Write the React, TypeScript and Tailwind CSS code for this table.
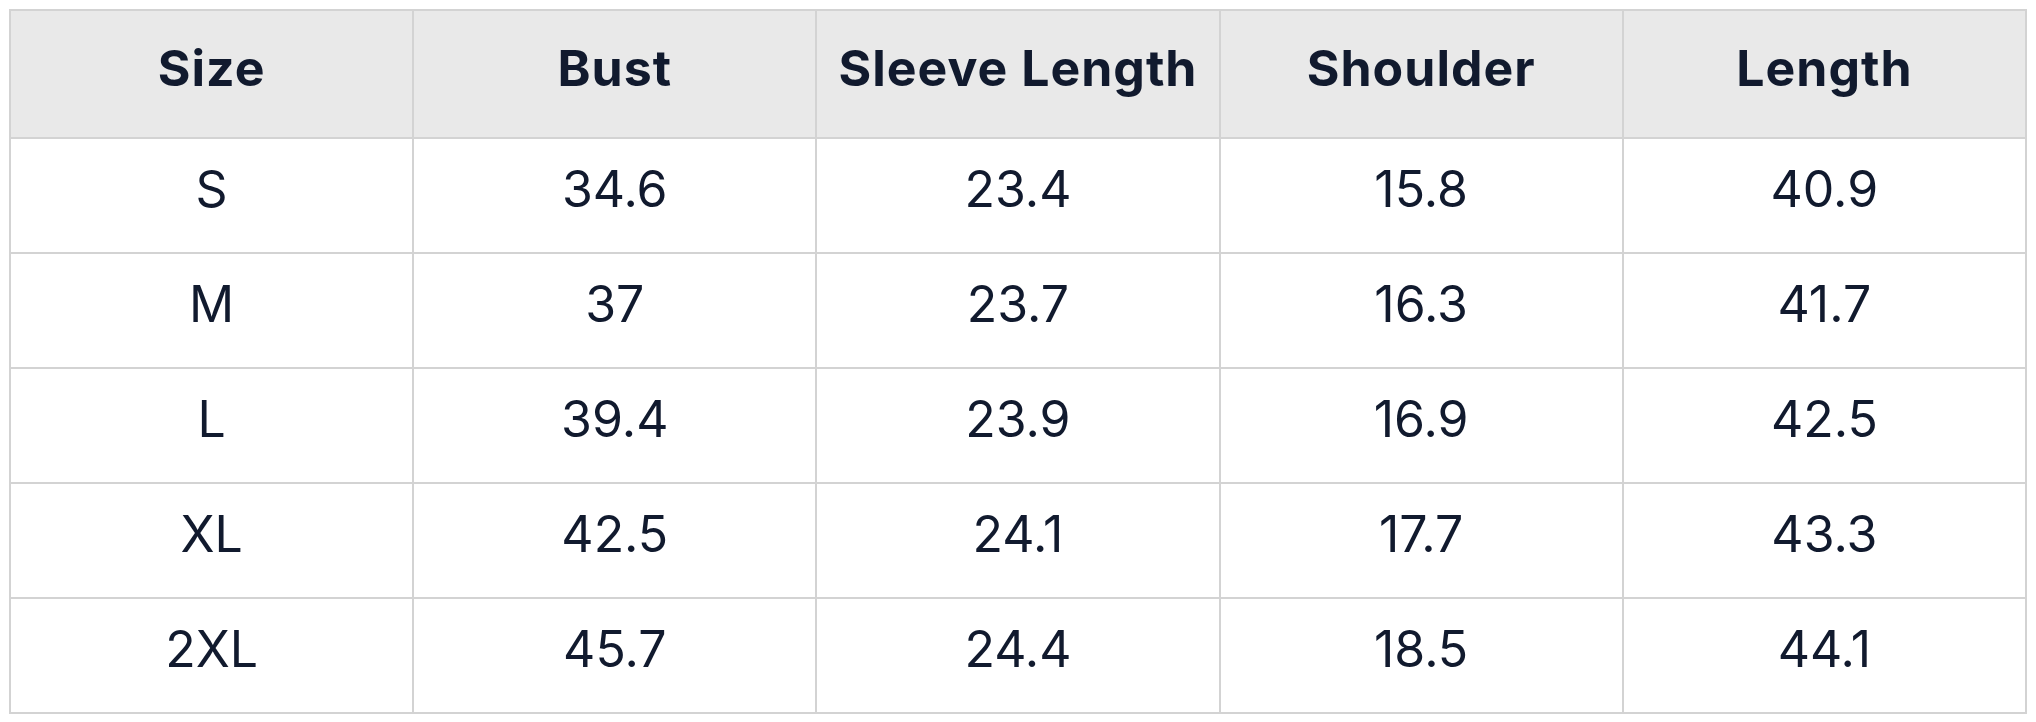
import React from 'react';

const headers = ['Size', 'Bust', 'Sleeve Length', 'Shoulder', 'Length'];

const rows: string[][] = [
  ['S', '34.6', '23.4', '15.8', '40.9'],
  ['M', '37', '23.7', '16.3', '41.7'],
  ['L', '39.4', '23.9', '16.9', '42.5'],
  ['XL', '42.5', '24.1', '17.7', '43.3'],
  ['2XL', '45.7', '24.4', '18.5', '44.1'],
];

export default function App() {
  return (
    <div className="w-full bg-white p-[9px] font-['Inter','Noto_Sans',sans-serif] text-[#111a2e]">
      <table className="w-[2018px] table-fixed border-collapse border-2 border-[#d3d3d3]">
        <thead>
          <tr className="h-[128px] bg-[#e9e9e9]">
            {headers.map((h) => (
              <th key={h} className="border-2 border-[#d3d3d3] pb-[12px] text-center align-middle text-[50px] font-bold leading-none tracking-[1px]">
                {h}
              </th>
            ))}
          </tr>
        </thead>
        <tbody>
          {rows.map((row) => (
            <tr key={row[0]} className="h-[115px]">
              {row.map((cell, i) => (
                <td key={i} className="border-2 border-[#d3d3d3] pb-[14px] text-center align-middle text-[50px] font-normal leading-none">
                  {cell}
                </td>
              ))}
            </tr>
          ))}
        </tbody>
      </table>
    </div>
  );
}
